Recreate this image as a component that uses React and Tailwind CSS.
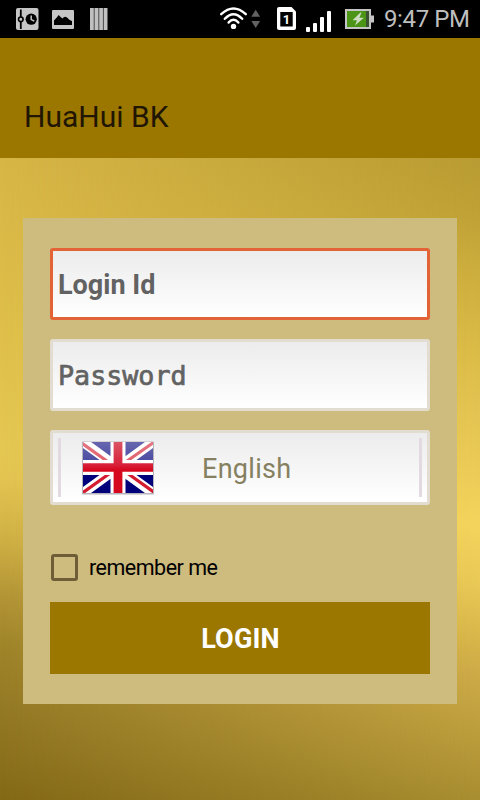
import React from "react";

function StatusBar() {
  return (
    <header className="h-[38px] w-full bg-black">
      <svg width="480" height="38" viewBox="0 0 480 38">
        {/* settings / clock notification */}
        <rect x="16" y="8" width="22.5" height="22" rx="2" fill="#c6c6c6" />
        <path d="M20.8 9.5V29" stroke="#000" strokeWidth="1.8" />
        <circle cx="20.8" cy="19.3" r="2.3" fill="#c6c6c6" stroke="#000" strokeWidth="1.6" />
        <circle cx="31.2" cy="19.2" r="5.6" fill="#000" />
        <path d="M31.2 15.5V19.6L34.3 21.2" stroke="#c6c6c6" strokeWidth="1.5" fill="none" />
        {/* picture notification */}
        <rect x="52" y="10" width="22" height="19" rx="1" fill="#c6c6c6" />
        <path d="M54 25V20.5Q56.5 18 58.7 15Q60.5 17 62.5 18.5Q64.5 15.5 67 17.5Q69 20 72 21V25Z" fill="#000" />
        {/* striped notification */}
        <rect x="90" y="8" width="17.5" height="22" fill="#c0c0c0" />
        <path d="M94.2 8V30M98.8 8V30M103.4 8V30" stroke="#4a4a4a" strokeWidth="1" />
        {/* wifi */}
        <g fill="none" stroke="#fff" strokeWidth="2.4" strokeLinecap="round">
          <path d="M221.2 14.2Q233.5 2.6 245.8 14.2" />
          <path d="M224.8 18.8Q233.5 9.6 242.2 18.8" />
          <path d="M228.6 22.6Q233.5 16.8 238.4 22.6" />
        </g>
        <circle cx="233.5" cy="26.4" r="2.7" fill="#fff" />
        <path d="M251.3 16.7L255.7 9.7L260.1 16.7Z" fill="#626262" />
        <path d="M251.3 21L255.7 28L260.1 21Z" fill="#626262" />
        {/* sim */}
        <path d="M279 7H291.5L296 11.5V28Q296 30 294 30H279Q277 30 277 28V9Q277 7 279 7Z" fill="#fff" />
        <rect x="280.3" y="12" width="12.4" height="14.5" fill="#000" />
        <text x="286.5" y="23.8" textAnchor="middle" fontSize="13" fontWeight="700" fill="#fff" fontFamily="Roboto, sans-serif">1</text>
        {/* signal */}
        <g fill="#fff">
          <rect x="306" y="27" width="4" height="5" rx="1" />
          <rect x="313" y="23" width="4" height="9" rx="1" />
          <rect x="320" y="17" width="4" height="15" rx="1" />
          <rect x="327" y="11" width="4" height="21" rx="1" />
        </g>
        {/* battery */}
        <rect x="346" y="10" width="24" height="18" fill="#4b9415" stroke="#c4c4c4" strokeWidth="2" />
        <rect x="366" y="11" width="3" height="16" fill="#3b5230" />
        <rect x="371" y="15.5" width="3" height="7" fill="#c4c4c4" />
        <path d="M360.5 12.5L352.5 20.2H357L355 25.5L363.8 17.8H359.4L361.5 12.5Z" fill="#cfdcc4" />
        <text x="384" y="27.2" textLength="86" fontSize="24" fill="#bebebe" fontFamily="Roboto, sans-serif">9:47 PM</text>
      </svg>
    </header>
  );
}

function UkFlag() {
  return (
    <svg width="74" height="56" viewBox="0 0 74 56" className="shrink-0">
      <defs>
        <clipPath id="flagArea"><rect x="2" y="2" width="70" height="51" /></clipPath>
        <linearGradient id="gloss" x1="0" y1="0" x2="0" y2="1">
          <stop offset="0" stopColor="#fff" stopOpacity="0.4" />
          <stop offset="1" stopColor="#fff" stopOpacity="0.27" />
        </linearGradient>
        <linearGradient id="crossRed" gradientUnits="userSpaceOnUse" x1="0" y1="2" x2="0" y2="53">
          <stop offset="0" stopColor="#dc5464" />
          <stop offset="0.45" stopColor="#d8203a" />
          <stop offset="0.55" stopColor="#d6081e" />
          <stop offset="1" stopColor="#d6081e" />
        </linearGradient>
      </defs>
      <rect x="1" y="1.5" width="72" height="53" rx="1" fill="#b7b3bd" />
      <g clipPath="url(#flagArea)">
        <rect x="2" y="2" width="70" height="51" fill="#00007a" />
        <path d="M2 2L72 53M72 2L2 53" stroke="#fff" strokeWidth="9.5" />
        <path d="M0 2.5L30 24M74 1.5L44 22.5M74 53L44 31.5M0 54L30 32.5" stroke="#d41c30" strokeWidth="3.2" />
        <rect x="2" y="2" width="70" height="25.5" fill="url(#gloss)" />
        <path d="M29.5 2H44.5V53H29.5ZM2 20H72V35H2Z" fill="#fff" />
        <path d="M32.6 2H41.4V53H32.6ZM2 23.2H72V31.8H2Z" fill="url(#crossRed)" />
      </g>
    </svg>
  );
}

export default function App() {
  return (
    <div className="flex h-[800px] w-[480px] flex-col overflow-hidden font-['Roboto',sans-serif]">
      <StatusBar />
      <div className="flex h-[120px] items-end bg-[#9b7700] pb-[23px] pl-6">
        <h1 className="text-[30px] leading-9 text-[#211503]">HuaHui BK</h1>
      </div>
      <main className="relative flex-1 bg-[linear-gradient(180deg,#d7b646_0%,#dcbb48_16%,#dfc04a_28%,#e4c652_45%,#e3c451_50%,#d8b94a_55%,#cdae43_60%,#b39536_68%,#9f8429_76%,#957a25_85%,#8b701d_94%,#836816_100%)] px-[23px] pt-[60px]">
        {/* right-hand sheen, fading out towards the left */}
        <div className="absolute inset-0 bg-[linear-gradient(180deg,#b89b32_0%,#bfa136_9%,#cfb03f_20%,#dbbb47_30%,#e4c452_40%,#edcd57_50%,#f4d45c_57%,#eac957_66%,#d8b64a_75%,#ceab48_80%,#bb9d3c_90%,#a88d30_100%)] [mask-image:linear-gradient(to_right,transparent,black)]" />
        <form className="relative flex h-[486px] w-[434px] flex-col bg-[#cebb7e] px-[27px] pt-[30px]">
          <div className="flex h-[72px] items-center rounded-[3px] border-[3px] border-[#e26336] bg-linear-to-b from-[#ececec] to-white pt-[2px] pl-[5px]">
            <span className="text-[27px] font-bold text-[#626262]">Login Id</span>
          </div>
          <div className="mt-[19px] flex h-[72px] items-center rounded-[3px] border-[3px] border-[#e2ddd0] bg-linear-to-b from-[#ececec] to-white pt-[2px] pl-[5px]">
            <span className="font-['DejaVu_Sans_Mono',monospace] text-[26.7px] text-[#626262] [-webkit-text-stroke:0.7px_#626262]">Password</span>
          </div>
          <div className="mt-[19px] flex h-[75px] items-center rounded-[3px] border-[3px] border-[#e2ddd0] bg-linear-to-b from-[#ececec] to-white px-[5px]">
            <div className="flex h-[59px] w-full items-center border-x-[3px] border-[#e2dae0] pl-5">
              <UkFlag />
              <span className="ml-[47px] pt-[3px] text-[27px] tracking-[0.3px] text-[#858060]">English</span>
            </div>
          </div>
          <label className="mt-[47px] flex h-[31px] items-center pl-[1px]">
            <span className="h-[27px] w-[27px] rounded-[3px] border-[3px] border-[#6e5d36]" />
            <span className="ml-[11px] pt-[2px] text-[21.5px] tracking-[-0.5px] text-black">remember me</span>
          </label>
          <button type="button" className="mt-[19px] h-[72px] bg-[#9b7700] pt-[2px] pl-[1px] text-[27px] font-bold tracking-[0.2px] text-white">LOGIN</button>
        </form>
      </main>
    </div>
  );
}
